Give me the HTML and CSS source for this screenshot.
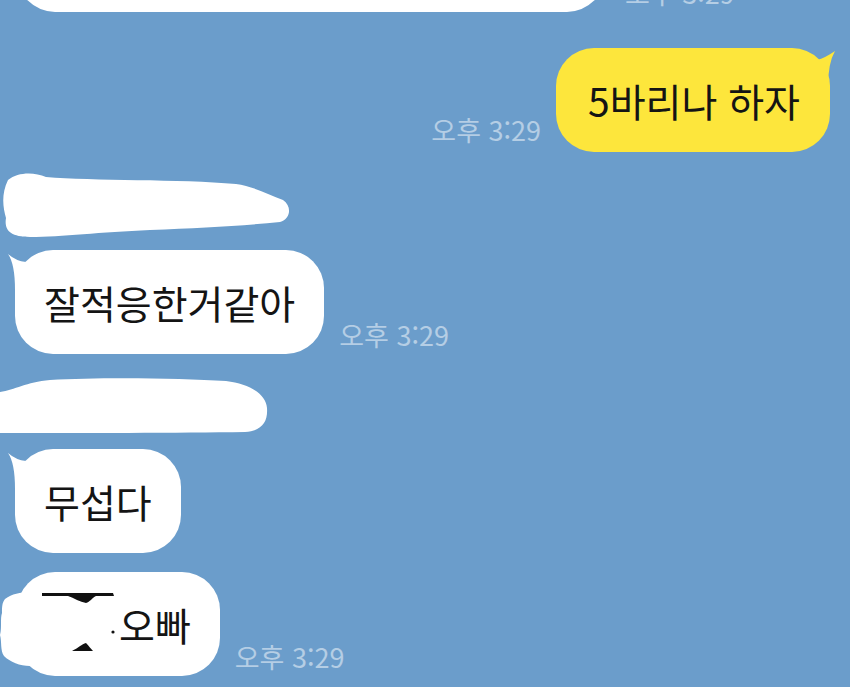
FILE: index.html
```html
<!DOCTYPE html>
<html lang="ko">
<head>
    <meta charset="UTF-8">
    <meta name="viewport" content="width=device-width, initial-scale=1.0">
    <title>채팅</title>
    <link rel="stylesheet" href="styles.css">
</head>
<body>
    <div class="chat">
        <!-- previous message, scrolled mostly off the top -->
        <div class="row row-in row-top">
            <div class="bubble bubble-wide"></div>
            <span class="time">오후 3:29</span>
        </div>

        <div class="row row-out">
            <span class="time">오후 3:29</span>
            <div class="bubble bubble-me tail-right">5바리나 하자</div>
        </div>

        <!-- scribbled-out sender name -->
        <svg class="scribble scribble-one" width="292" height="66" viewBox="0 0 292 66">
            <path d="M8 8 C18 0 34 0 46 5 C92 9 180 7 236 12 C252 14 268 22 283 28 C292 34 291 47 280 50 C240 54 200 56 150 58 C100 60 62 65 30 65 C10 65 4 58 6 46 C3 36 1 22 8 8 Z"/>
        </svg>

        <div class="row row-in">
            <div class="bubble tail-left">잘적응한거같아</div>
            <span class="time">오후 3:29</span>
        </div>

        <svg class="scribble scribble-two" width="270" height="57" viewBox="0 0 270 57">
            <path d="M0 15 C15 13 26 5 50 3 C100 0 180 1 226 4 C250 7 266 17 267 31 C268 45 262 54 245 55 C180 56 80 56 0 56 Z"/>
        </svg>

        <div class="row row-in">
            <div class="bubble tail-left">무섭다</div>
        </div>

        <div class="row row-in row-last">
            <div class="bubble bubble-hidden">
                <svg class="cover" width="118" height="104" viewBox="0 0 118 104">
                    <path class="cover-white" d="M5 27 C12 22 20 20 30 20 L116 20 L116 94 L30 94 C20 94 10 90 4 84 C0 78 2 70 0 63 C2 55 0 47 2 41 C2 35 2 31 5 27 Z"/>
                    <path class="cover-ink" d="M42 21 L113 21 L114 24 L96 24 C92 26 90 30 86 31 C80 30 74 26 68 24 L42 24 Z"/>
                    <circle class="cover-ink" cx="113" cy="60" r="1.6"/>
                    <path class="cover-ink" d="M72 79 C78 76 82 72 86 71 C89 74 91 77 93 79 Z"/>
                </svg>
                <span class="masked"></span>오빠
            </div>
            <span class="time">오후 3:29</span>
        </div>
    </div>
</body>
</html>
```

FILE: styles.css
```css
body {
    margin: 0;
    background-color: #6b9dcb;
    font-family: "Noto Sans CJK KR", "Noto Sans", sans-serif;
    overflow: hidden;
}
.chat {
    display: flex;
    flex-direction: column;
    height: 687px;
}
.row {
    display: flex;
    align-items: flex-end;
    gap: 15px;
}
.row-in {
    padding-left: 15px;
}
.row-out {
    justify-content: flex-end;
    padding-right: 20px;
    margin-top: 36px;
}
.row-top {
    margin-top: -92px;
    padding-left: 17px;
    gap: 20px;
}
.row-top .time {
    margin-bottom: 6px;
}
.bubble {
    position: relative;
    background: #fff;
    color: #141414;
    font-size: 39px;
    line-height: 50px;
    padding: 27px 29px;
    border-radius: 38px;
    white-space: nowrap;
}
.bubble-wide {
    width: 530px;
    height: 50px;
}
.bubble-me {
    background: #fde63c;
    padding: 27px 30px 27px 32px;
}
.tail-left::before,
.tail-right::before {
    content: "";
    position: absolute;
    top: 4px;
    width: 24px;
    height: 36px;
    background: inherit;
}
.tail-left::before {
    left: -7px;
    clip-path: path("M0 0 Q8 7 18 8 L18 36 L7 36 Q7 10 0 0 Z");
}
.tail-right::before {
    right: -5px;
    top: 3px;
    clip-path: path("M24 0 Q14 7 6 9 L6 36 L17 36 Q17 12 24 0 Z");
}
.time {
    color: rgba(255, 255, 255, 0.5);
    font-size: 27px;
    line-height: 1;
    margin-bottom: 6px;
    white-space: nowrap;
}
.row-out .time {
    margin-bottom: 9px;
}
.scribble {
    display: block;
    fill: #fff;
    flex: none;
}
.scribble-one {
    margin-top: 20px;
}
.scribble-two {
    margin-top: 23px;
}
.scribble + .row-in {
    margin-top: 12px;
}
.scribble-two + .row-in {
    margin-top: 15px;
}
.row-in.row-last {
    margin-top: 19px;
    padding-left: 17px;
}
.masked {
    display: inline-block;
    width: 73px;
    height: 1em;
}
.cover {
    position: absolute;
    left: -17px;
    top: 0;
}
.cover-white {
    fill: #fff;
}
.cover-ink {
    fill: #111;
}
```
